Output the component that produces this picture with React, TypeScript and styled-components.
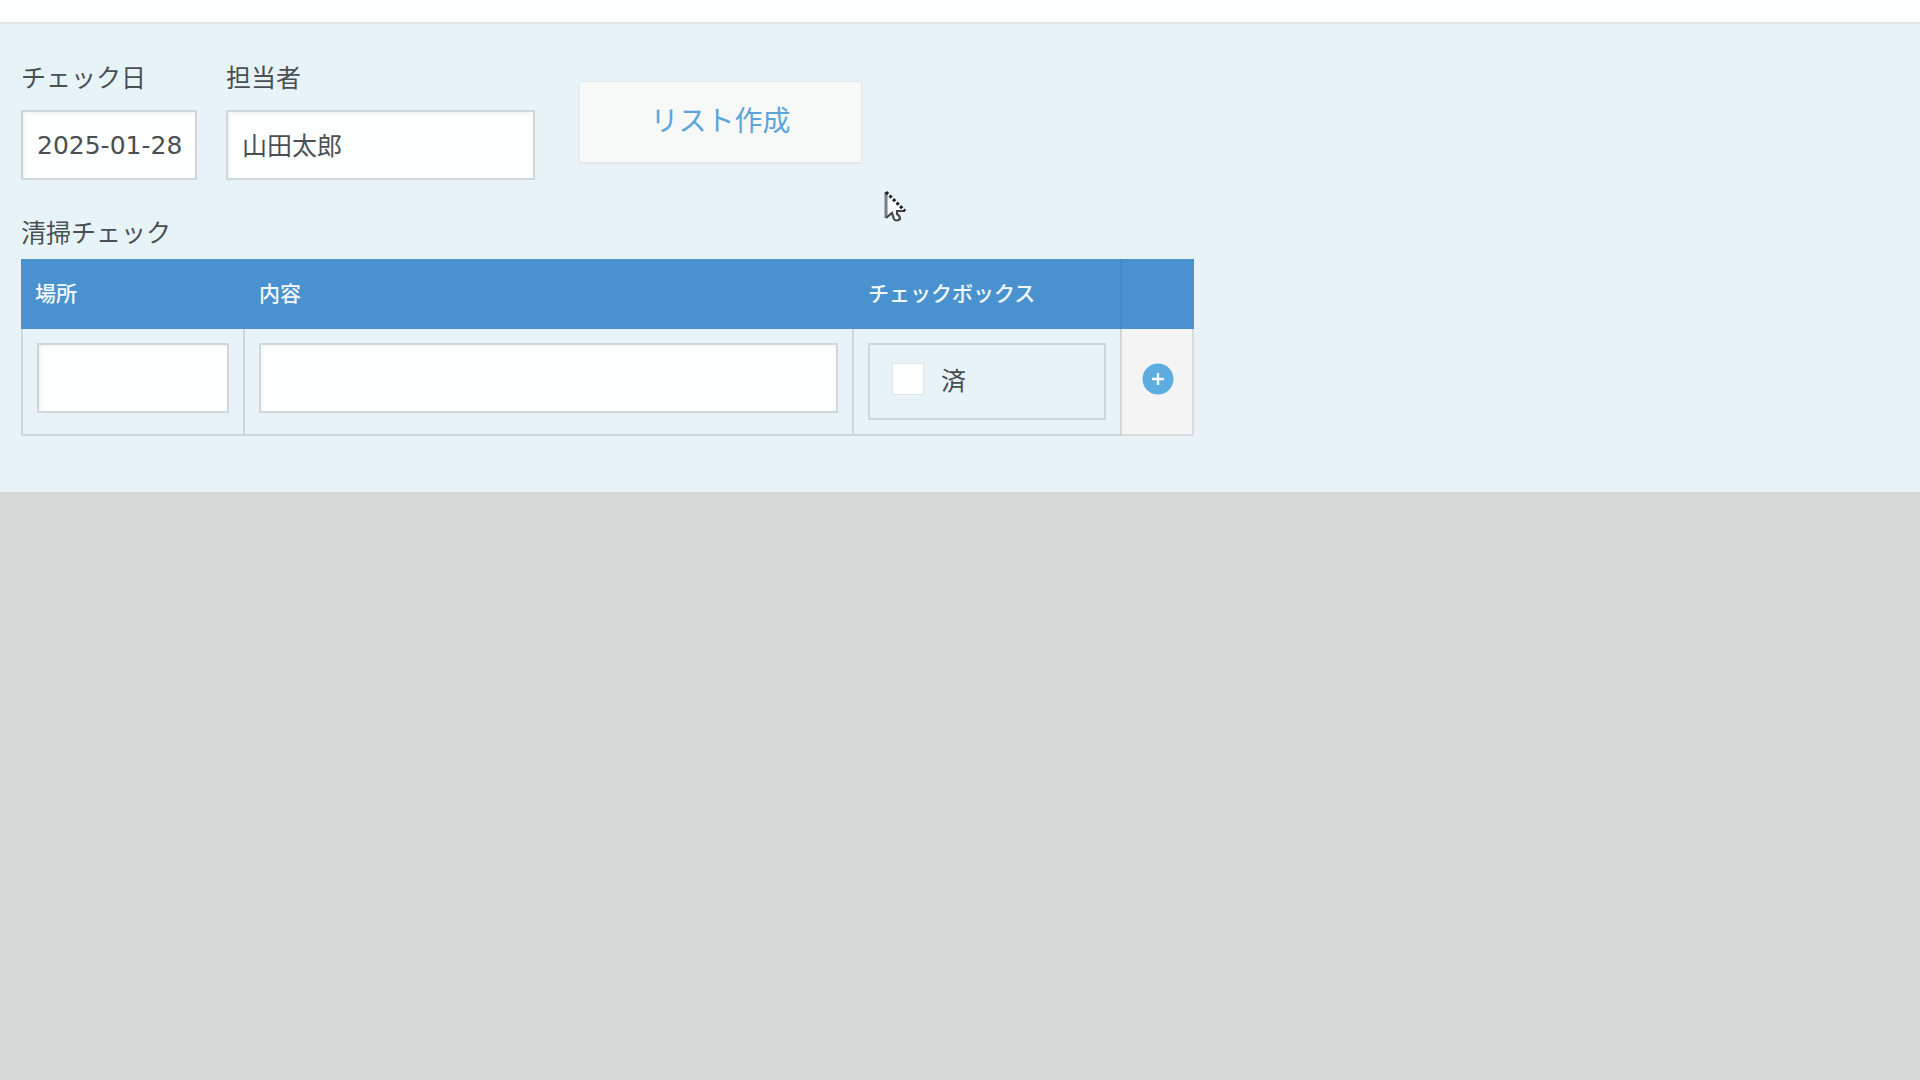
import React, { useState } from "react";
import styled, { createGlobalStyle } from "styled-components";

const line = "#cfd7dc";
const japanese = `"Noto Sans CJK JP", sans-serif`;

const GlobalStyle = createGlobalStyle`
  *, *::before, *::after { box-sizing: border-box; }
  body {
    margin: 0;
    background: #d7d9d9;
    color: #4a4f53;
    font-family: ${japanese};
    font-size: 25px;
    line-height: 36px;
  }
  button, input { font: inherit; color: inherit; }
`;

const TopBar = styled.header`
  height: 24px;
  background: #fdfefe;
  border-bottom: 2px solid #dde5e8;
`;

const Panel = styled.main`
  padding: 34px 21px 56px;
  background: #e8f3f7;
`;

const FieldRow = styled.div`
  display: flex;
  align-items: flex-start;
  margin-bottom: 33px;
`;

const Field = styled.div<{ $width: number }>`
  display: flex;
  flex-direction: column;
  gap: 16px;
  width: ${(p) => p.$width}px;
  margin-right: 29px;
`;

const Label = styled.label`
  white-space: nowrap;
`;

const TextInput = styled.input<{ $numeric?: boolean }>`
  display: block;
  width: 100%;
  height: 70px;
  padding: ${(p) => (p.$numeric ? "0 14px" : "0 14px 2px")};
  background: #fdfefe;
  border: 2px solid ${line};
  border-radius: 0;
  box-shadow: inset 2px 2px 3px #f2f4f5;
  outline: none;
  font-family: ${(p) => (p.$numeric ? `"DejaVu Sans", sans-serif` : japanese)};
`;

const CreateButton = styled.button`
  width: 283px;
  height: 82px;
  margin: 23px 0 0 15px;
  padding: 0 0 6px;
  background: #f7f8f8;
  border: 1px solid #e3e9ec;
  box-shadow: 0 1px 1px #e3e7e9;
  color: #5ba5d9;
  font-size: 28px;
  cursor: pointer;
`;

const CheckTable = styled.table`
  width: 1173px;
  table-layout: fixed;
  border-spacing: 0;
`;

const Caption = styled.caption`
  padding-bottom: 10px;
  text-align: left;
`;

const HeadCell = styled.th<{ $divided?: boolean }>`
  height: 70px;
  padding: 0 14px 4px;
  background: #4a91cf;
  border-right: ${(p) => (p.$divided ? "2px solid #448ac8" : "0")};
  color: #f4f9fd;
  font-size: 21px;
  font-weight: 500;
  text-align: left;
`;

const Cell = styled.td`
  padding: 14px;
  vertical-align: top;
  border-right: 2px solid ${line};
  border-bottom: 2px solid ${line};
  &:first-child { border-left: 2px solid ${line}; }
`;

const ActionCell = styled(Cell)`
  padding: 0;
  vertical-align: middle;
  background: #f4f4f5;
  border-color: #d9dcdf;
`;

const CheckBoxFrame = styled.div`
  display: flex;
  align-items: center;
  height: 77px;
  padding: 0 22px 6px;
  border: 2px solid ${line};
`;

const CheckLabel = styled.label`
  display: flex;
  align-items: center;
  gap: 17px;
`;

const Check = styled.input`
  appearance: none;
  width: 32px;
  height: 32px;
  margin: 0;
  background: #fdfefe;
  border: 1px solid #dfe5e9;
  &:checked { background: #5faee0; }
`;

const AddButton = styled.button`
  display: flex;
  align-items: center;
  justify-content: center;
  width: 100%;
  height: 105px;
  padding: 0 0 6px 2px;
  background: transparent;
  border: 0;
  cursor: pointer;
`;

const Pointer = styled.svg`
  position: absolute;
  left: 884px;
  top: 190px;
  pointer-events: none;
`;

export default function App() {
  const [rows, setRows] = useState([0]);
  const addRow = () => setRows((r) => [...r, r.length]);

  return (
    <>
      <GlobalStyle />
      <TopBar />
      <Panel>
        <FieldRow>
          <Field $width={176}>
            <Label htmlFor="date">チェック日</Label>
            <TextInput id="date" $numeric defaultValue="2025-01-28" />
          </Field>
          <Field $width={309}>
            <Label htmlFor="person">担当者</Label>
            <TextInput id="person" defaultValue="山田太郎" />
          </Field>
          <CreateButton type="button">リスト作成</CreateButton>
        </FieldRow>
        <CheckTable>
          <Caption>清掃チェック</Caption>
          <colgroup>
            <col width={224} />
            <col width={609} />
            <col width={268} />
            <col width={72} />
          </colgroup>
          <thead>
            <tr>
              <HeadCell scope="col">場所</HeadCell>
              <HeadCell scope="col">内容</HeadCell>
              <HeadCell scope="col" $divided>チェックボックス</HeadCell>
              <HeadCell />
            </tr>
          </thead>
          <tbody>
            {rows.map((id) => (
              <tr key={id}>
                <Cell><TextInput aria-label="場所" /></Cell>
                <Cell><TextInput aria-label="内容" /></Cell>
                <Cell>
                  <CheckBoxFrame>
                    <CheckLabel>
                      <Check type="checkbox" />
                      済
                    </CheckLabel>
                  </CheckBoxFrame>
                </Cell>
                <ActionCell>
                  <AddButton type="button" aria-label="行を追加" onClick={addRow}>
                    <svg width="32" height="32" viewBox="0 0 32 32" aria-hidden="true">
                      <circle cx="16" cy="16" r="15.5" fill="#5dade0" />
                      <path d="M16 10v12M10 16h12" stroke="#f2f9fd" strokeWidth="2.4" />
                    </svg>
                  </AddButton>
                </ActionCell>
              </tr>
            ))}
          </tbody>
        </CheckTable>
      </Panel>
      <Pointer width="24" height="34" viewBox="0 0 24 34" aria-hidden="true">
        <path d="M2 2V28L8 23L11 30Q13 32 16 30L13 21H21Z" fill="#fcfdfe" />
        <path d="M2 2V28" stroke="#757c86" strokeWidth="3" fill="none" />
        <path d="M2 28L8 23L10 29Q12 32 16 29Q16 26 13 24L13 21H21" stroke="#454a50" strokeWidth="2.2" fill="none" />
        <path d="M2 2L21 21" stroke="#1d2023" strokeWidth="3" strokeDasharray="3 2" fill="none" />
      </Pointer>
    </>
  );
}
